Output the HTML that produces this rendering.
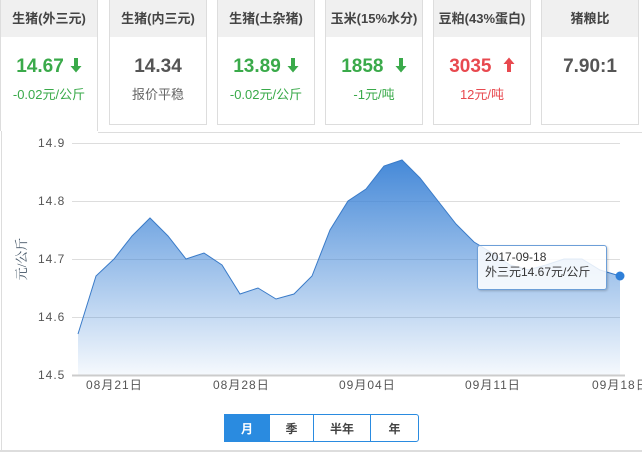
<!DOCTYPE html>
<html><head><meta charset="utf-8"><style>
body{margin:0;width:642px;height:452px;background:#fff;font-family:"Liberation Sans","Noto Sans CJK SC",sans-serif;position:relative;overflow:hidden}
.card{position:absolute;top:0;width:96px;height:124px;border:1px solid #ddd;border-top:none;background:#fff;text-align:center}
.card .h{height:37px;line-height:37px;background:#f0f0f0;font-size:13px;color:#444;font-weight:bold}
.card .v{margin-top:17px;font-size:19px;font-weight:bold;color:#555;height:26px;line-height:26px}
.card .s{font-size:13px;color:#666;margin-top:4px}
.g{color:#3aaa4a!important}.r{color:#e8494f!important}
.ar{display:inline-block;margin-left:6px;vertical-align:-1px}
.ax{position:absolute;font-size:12px;color:#555;letter-spacing:1px;white-space:nowrap}
.btn{position:absolute;top:414px;height:28px;line-height:28px;text-align:center;font-size:12px;font-weight:bold;color:#444;border:1px solid #2a8be0;box-sizing:border-box}
</style></head><body>
<div class="card" style="left:0;height:131px;border-bottom:none"><div class="h">生猪(外三元)</div><div class="v g">14.67<svg class="ar" width="12" height="16" viewBox="0 0 12 16"><path d="M4 1h4v8h3.5L6 15.5 0.5 9H4z" fill="#3aaa4a"/></svg></div><div class="s g">-0.02元/公斤</div></div>
<div style="position:absolute;left:98px;top:132px;width:544px;height:1px;background:#ddd"></div>
<div class="card" style="left:109px"><div class="h">生猪(内三元)</div><div class="v">14.34</div><div class="s">报价平稳</div></div>
<div class="card" style="left:217px"><div class="h">生猪(土杂猪)</div><div class="v g">13.89<svg class="ar" width="12" height="16" viewBox="0 0 12 16"><path d="M4 1h4v8h3.5L6 15.5 0.5 9H4z" fill="#3aaa4a"/></svg></div><div class="s g">-0.02元/公斤</div></div>
<div class="card" style="left:325px"><div class="h">玉米(15%水分)</div><div class="v g">1858 <svg class="ar" width="12" height="16" viewBox="0 0 12 16"><path d="M4 1h4v8h3.5L6 15.5 0.5 9H4z" fill="#3aaa4a"/></svg></div><div class="s g">-1元/吨</div></div>
<div class="card" style="left:433px"><div class="h">豆粕(43%蛋白)</div><div class="v r">3035 <svg class="ar" width="12" height="16" viewBox="0 0 12 16"><path d="M4 15h4V7h3.5L6 0.5 0.5 7H4z" fill="#e8494f"/></svg></div><div class="s r">12元/吨</div></div>
<div class="card" style="left:541px"><div class="h">猪粮比</div><div class="v">7.90:1</div></div>
<div style="position:absolute;left:1px;top:131px;width:1px;height:321px;background:#ddd"></div>
<svg style="position:absolute;left:0;top:0" width="642" height="452">
<defs><linearGradient id="gr" x1="0" y1="0" x2="0" y2="1"><stop offset="0" stop-color="#3c83d6" stop-opacity=".95"/><stop offset="1" stop-color="#3c83d6" stop-opacity=".05"/></linearGradient></defs>
<g stroke="#ddd" stroke-width="1"><line x1="72" y1="143.5" x2="620" y2="143.5"/><line x1="72" y1="201.5" x2="620" y2="201.5"/><line x1="72" y1="259.5" x2="620" y2="259.5"/><line x1="72" y1="317.5" x2="620" y2="317.5"/></g>
<polygon fill="url(#gr)" points="78,375 78,334 96,276 114,259 132,236 150,218 168,236 186,259 204,253 222,265 240,294 258,288 276,299 294,294 312,276 330,230 348,201 366,189 384,166 402,160 420,178 438,201 456,224 474,242 492,253 510,265 528,270 546,265 564,259 582,259 600,270 620,276 620,375"/>
<polyline fill="none" stroke="#3a7bc8" stroke-width="1" points="78,334 96,276 114,259 132,236 150,218 168,236 186,259 204,253 222,265 240,294 258,288 276,299 294,294 312,276 330,230 348,201 366,189 384,166 402,160 420,178 438,201 456,224 474,242 492,253 510,265 528,270 546,265 564,259 582,259 600,270 620,276"/>
<line x1="72" y1="375.5" x2="625" y2="375.5" stroke="#ccc" stroke-width="2"/>
<circle cx="620" cy="276" r="4.5" fill="#2f7fd8"/>
<text x="26" y="259" font-size="13" fill="#456" transform="rotate(-90 26 259)" text-anchor="middle" font-family="Liberation Serif,Noto Serif CJK SC,serif">元/公斤</text>
</svg>
<div class="ax" style="left:38px;top:136px">14.9</div>
<div class="ax" style="left:38px;top:194px">14.8</div>
<div class="ax" style="left:38px;top:252px">14.7</div>
<div class="ax" style="left:38px;top:310px">14.6</div>
<div class="ax" style="left:38px;top:368px">14.5</div>
<div class="ax" style="left:86px;top:376px">08月21日</div>
<div class="ax" style="left:213px;top:376px">08月28日</div>
<div class="ax" style="left:339px;top:376px">09月04日</div>
<div class="ax" style="left:465px;top:376px">09月11日</div>
<div class="ax" style="left:592px;top:376px">09月18日</div>
<div style="position:absolute;left:477px;top:245px;width:130px;height:45px;box-sizing:border-box;border:1px solid #6d9fd8;border-radius:3px;background:rgba(255,255,255,.85);font-size:12px;color:#333;padding:4px 0 0 7px;line-height:15px;box-shadow:1px 1px 2px rgba(0,0,0,.2)">2017-09-18<br>外三元14.67元/公斤</div>
<div class="btn" style="left:224px;width:46px;background:#2a8be0;color:#fff">月</div>
<div class="btn" style="left:269px;width:45px">季</div>
<div class="btn" style="left:313px;width:58px">半年</div>
<div class="btn" style="left:370px;width:49px;border-radius:0 3px 3px 0">年</div>
<div style="position:absolute;left:0;top:450px;width:642px;height:2px;background:#ddd"></div>
</body></html>
